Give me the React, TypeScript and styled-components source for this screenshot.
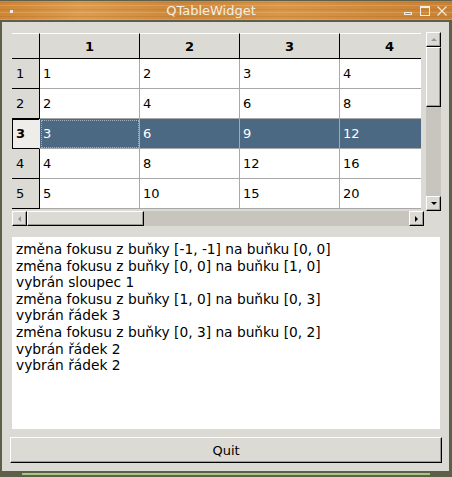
import React from 'react'
import styled, { createGlobalStyle } from 'styled-components'

const GlobalStyle = createGlobalStyle`
  html, body {
    margin: 0;
    padding: 0;
    background: #5e5f48;
  }
  body {
    font-family: "DejaVu Sans", "Liberation Sans", sans-serif;
    font-size: 13px;
  }
`

const frameColor = '#5e5f48'
const face = '#dcdad5'

const Window = styled.div`
  width: 452px;
  height: 477px;
  display: flex;
  flex-direction: column;
  background: ${frameColor};
`

const TitleBar = styled.div`
  height: 21px;
  box-sizing: border-box;
  border-top: 1px solid ${frameColor};
  border-bottom: 1px solid ${frameColor};
  margin-bottom: 1px;
  display: flex;
  align-items: center;
  background:
    repeating-linear-gradient(
      0deg,
      rgba(255, 222, 160, 0.22) 0 1px,
      transparent 1px 3px,
      rgba(140, 70, 15, 0.14) 3px 4px,
      transparent 4px 7px
    ),
    linear-gradient(
      90deg,
      #cf8536,
      #dc9c4f 18%,
      #cd863a 40%,
      #d99649 62%,
      #d08a3d 82%,
      #c98234
    );
  color: #f4efe2;
`

const MenuDot = styled.div`
  width: 3px;
  height: 3px;
  background: #f4efe2;
  margin: 1px 0 0 10px;
`

const Title = styled.div`
  flex: 1;
  text-align: center;
  font-size: 13px;
  padding-left: 5px;
  line-height: 19px;
`

const Controls = styled.div`
  display: flex;
  align-items: center;
  gap: 7px;
  margin-right: 5px;
`

const ControlIcon = styled.svg`
  display: block;
`

const Body = styled.div`
  flex: 1;
  display: flex;
`

const Client = styled.div`
  flex: 1;
  margin: 0 3px 0 2px;
  background: ${face};
  padding: 9px 7px 8px 8px;
  display: flex;
  flex-direction: column;
`

const BottomEdge = styled.div`
  height: 6px;
  padding: 2px 0 0 22px;
  box-sizing: border-box;
`

const GreenBar = styled.div`
  width: 408px;
  height: 2px;
  background: #a6c77f;
`

const TableFrame = styled.div`
  padding: 2px 1px 2px 2px;
  display: grid;
  grid-template-columns: 409px 5px 15px;
  grid-template-rows: 178px 15px;
`

const Viewport = styled.div`
  overflow: hidden;
  background: ${face};
`

const Grid = styled.div`
  display: grid;
  grid-template-columns: 28px repeat(4, 100px);
  grid-template-rows: 26px repeat(5, 30px);
  width: 428px;
`

const HeaderCell = styled.div`
  box-sizing: border-box;
  background: ${face};
  border-top: 1px solid #fff;
  border-right: 1px solid #000;
  border-bottom: 1px solid #000;
  font-weight: bold;
  display: flex;
  align-items: center;
  justify-content: center;
  padding-top: 1px;
`

const RowHeader = styled.div<{ $current?: boolean }>`
  box-sizing: border-box;
  background: ${p => (p.$current ? '#efede9' : face)};
  border-right: 1px solid ${p => (p.$current ? '#efede9' : '#000')};
  border-bottom: 1px solid #000;
  box-shadow: ${p => (p.$current ? 'inset 1px 1px 0 #000' : 'none')};
  font-weight: ${p => (p.$current ? 'bold' : 'normal')};
  display: flex;
  align-items: center;
  padding-left: 4px;
`

const Cell = styled.div<{ $selected?: boolean; $focus?: boolean }>`
  box-sizing: border-box;
  background: ${p => (p.$selected ? '#4b6983' : '#fff')};
  color: ${p => (p.$selected ? '#fff' : '#000')};
  border-right: 1px solid #a8a8a8;
  border-bottom: 1px solid #a8a8a8;
  display: flex;
  align-items: center;
  padding-left: 3px;
  outline: ${p => (p.$focus ? '1px dotted #9fb1c4' : 'none')};
  outline-offset: -2px;
`

const ScrollBar = styled.div<{ $vertical?: boolean }>`
  display: flex;
  flex-direction: ${p => (p.$vertical ? 'column' : 'row')};
  background: #c8c5bf;
`

const VScroll = styled(ScrollBar)`
  grid-column: 3;
  grid-row: 1;
  margin-top: -1px;
`

const HScroll = styled(ScrollBar)`
  grid-column: 1 / 3;
  grid-row: 2;
  margin-right: 2px;
`

const Bevel = styled.div`
  box-sizing: border-box;
  flex: none;
  background: ${face};
  border-top: 1px solid #fff;
  border-left: 1px solid #fff;
  border-right: 1px solid #000;
  border-bottom: 1px solid #000;
  box-shadow: inset -1px -1px 0 #9d9a94;
`

const ArrowButton = styled(Bevel)`
  width: 15px;
  height: 15px;
  display: flex;
  align-items: center;
  justify-content: center;
`

const Thumb = styled(Bevel)<{ $length: number; $vertical?: boolean }>`
  width: ${p => (p.$vertical ? '15px' : `${p.$length}px`)};
  height: ${p => (p.$vertical ? `${p.$length}px` : '15px')};
`

const Arrow = styled.div<{ $dir: 'up' | 'down' | 'left' | 'right'; $disabled?: boolean }>`
  width: 0;
  height: 0;
  ${p => {
    const c = p.$disabled ? '#9a9893' : '#000'
    switch (p.$dir) {
      case 'up':
        return `border-left: 3px solid transparent; border-right: 3px solid transparent; border-bottom: 3px solid ${c};`
      case 'down':
        return `border-left: 3px solid transparent; border-right: 3px solid transparent; border-top: 3px solid ${c};`
      case 'left':
        return `border-top: 3px solid transparent; border-bottom: 3px solid transparent; border-right: 3px solid ${c};`
      default:
        return `border-top: 3px solid transparent; border-bottom: 3px solid transparent; border-left: 3px solid ${c};`
    }
  }}
`

const Spacer = styled.div`
  flex: 1;
`

const LogFrame = styled.div`
  margin-top: 7px;
  padding: 2px;
  height: 196px;
  box-sizing: border-box;
  display: flex;
`

const Log = styled.div`
  flex: 1;
  background: #fff;
  padding: 4px 4px 2px;
  font-size: 13.75px;
  line-height: 16.6px;
  color: #000;
  white-space: nowrap;
  overflow: hidden;
`

const QuitButton = styled.button`
  margin-top: 6px;
  height: 26px;
  width: 100%;
  box-sizing: border-box;
  background: ${face};
  border-top: 1px solid #fff;
  border-left: 1px solid #fff;
  border-right: 1px solid #000;
  border-bottom: 1px solid #000;
  box-shadow: inset -1px -1px 0 #9d9a94;
  font-family: inherit;
  font-size: 13px;
  color: #000;
  padding: 0;
`

const logLines = [
  'změna fokusu z buňky [-1, -1] na buňku [0, 0]',
  'změna fokusu z buňky [0, 0] na buňku [1, 0]',
  'vybrán sloupec 1',
  'změna fokusu z buňky [1, 0] na buňku [0, 3]',
  'vybrán řádek 3',
  'změna fokusu z buňky [0, 3] na buňku [0, 2]',
  'vybrán řádek 2',
  'vybrán řádek 2',
]

const rows = [1, 2, 3, 4, 5]
const cols = [1, 2, 3, 4]
const selectedRow = 3

export default function App() {
  return (
    <>
      <GlobalStyle />
      <Window>
        <TitleBar>
          <MenuDot />
          <Title>QTableWidget</Title>
          <Controls>
            <ControlIcon width="9" height="9" viewBox="0 0 9 9">
              <rect x="0.5" y="6.5" width="7" height="2" fill="none" stroke="#f4efe2" />
            </ControlIcon>
            <ControlIcon width="10" height="10" viewBox="0 0 10 10">
              <rect x="0.5" y="0.5" width="9" height="9" fill="none" stroke="#f4efe2" />
              <line x1="0" y1="1.5" x2="10" y2="1.5" stroke="#f4efe2" />
            </ControlIcon>
            <ControlIcon width="10" height="10" viewBox="0 0 10 10">
              <path d="M0.5 0.5 L9.5 9.5 M9.5 0.5 L0.5 9.5" stroke="#f4efe2" strokeWidth="1.1" />
            </ControlIcon>
          </Controls>
        </TitleBar>
        <Body>
          <Client>
            <TableFrame>
              <Viewport>
                <Grid>
                  <HeaderCell />
                  {cols.map(c => (
                    <HeaderCell key={c}>{c}</HeaderCell>
                  ))}
                  {rows.map(r => (
                    <React.Fragment key={r}>
                      <RowHeader $current={r === selectedRow}>{r}</RowHeader>
                      {cols.map(c => (
                        <Cell
                          key={c}
                          $selected={r === selectedRow}
                          $focus={r === selectedRow && c === 1}
                        >
                          {r * c}
                        </Cell>
                      ))}
                    </React.Fragment>
                  ))}
                </Grid>
              </Viewport>
              <VScroll $vertical>
                <ArrowButton>
                  <Arrow $dir="up" $disabled />
                </ArrowButton>
                <Thumb $vertical $length={60} />
                <Spacer />
                <ArrowButton>
                  <Arrow $dir="down" />
                </ArrowButton>
              </VScroll>
              <HScroll>
                <ArrowButton>
                  <Arrow $dir="left" $disabled />
                </ArrowButton>
                <Thumb $length={117} />
                <Spacer />
                <ArrowButton>
                  <Arrow $dir="right" />
                </ArrowButton>
              </HScroll>
            </TableFrame>
            <LogFrame>
              <Log>
                {logLines.map((l, i) => (
                  <div key={i}>{l}</div>
                ))}
              </Log>
            </LogFrame>
            <QuitButton>Quit</QuitButton>
          </Client>
        </Body>
        <BottomEdge>
          <GreenBar />
        </BottomEdge>
      </Window>
    </>
  )
}
